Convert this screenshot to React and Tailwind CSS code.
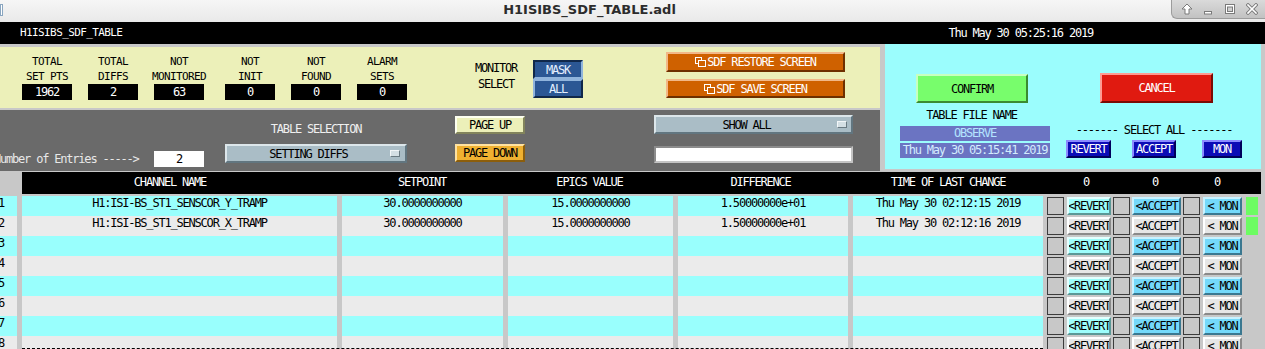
import React from 'react';

const FONT = "font-['DejaVu_Sans_Mono','Liberation_Mono',monospace] text-[12px] tracking-[-1.2px] leading-[14px]";
const SMALL = 'text-[11px] tracking-[-0.6px]';

const rows = [
  { name: 'H1:ISI-BS_ST1_SENSCOR_Y_TRAMP', set: '30.0000000000', epics: '15.0000000000', diff: '1.50000000e+01', time: 'Thu May 30 02:12:15 2019', flag: true },
  { name: 'H1:ISI-BS_ST1_SENSCOR_X_TRAMP', set: '30.0000000000', epics: '15.0000000000', diff: '1.50000000e+01', time: 'Thu May 30 02:12:16 2019', flag: true },
  {}, {}, {}, {}, {}, {},
];

const stats = [
  { a: 'TOTAL', b: 'SET PTS', v: '1962', ml: 'ml-[22px]' },
  { a: 'TOTAL', b: 'DIFFS', v: '2', ml: 'ml-[16px]' },
  { a: 'NOT', b: 'MONITORED', v: '63', ml: 'ml-[16px]' },
  { a: 'NOT', b: 'INIT', v: '0', ml: 'ml-[21px]' },
  { a: 'NOT', b: 'FOUND', v: '0', ml: 'ml-[16px]' },
  { a: 'ALARM', b: 'SETS', v: '0', ml: 'ml-[16px]' },
];

const TitleBar = () => (
  <div className="h-[22px] flex bg-gradient-to-b from-[#f6f6f6] to-[#e9e9e9] relative">
    <div className="absolute left-0 top-[4px] w-[3px] h-[12px] border border-[#8aa6c0] bg-white" />
    <div className="w-[1171px] text-center pl-[8px] pt-[1px] font-['DejaVu_Sans',sans-serif] font-bold text-[13px] leading-[18px] text-[#2c2c2c] tracking-normal">
      H1ISIBS_SDF_TABLE.adl
    </div>
    <div className="w-[94px] h-[19px] bg-gradient-to-b from-[#dadada] to-[#c2c2c2] border-l border-b border-[#9c9c9c] rounded-bl-[6px] flex items-center">
      <svg className="ml-[9px]" width="12" height="12" viewBox="0 0 12 12">
        <polygon points="6,1 11,6 8,6 8,11 4,11 4,6 1,6" fill="white" stroke="#7a7a7a" strokeWidth="1" />
      </svg>
      <svg className="ml-[9px]" width="12" height="12" viewBox="0 0 12 12">
        <rect x="2.5" y="8.5" width="7" height="2.5" fill="white" stroke="#7a7a7a" strokeWidth="1" />
      </svg>
      <svg className="ml-[10px]" width="12" height="12" viewBox="0 0 12 12">
        <rect x="1.5" y="1.5" width="9" height="9" fill="white" stroke="#7a7a7a" strokeWidth="1" />
        <rect x="3.5" y="4" width="5" height="4.5" fill="#cfcfcf" stroke="#7a7a7a" strokeWidth="1" />
      </svg>
      <svg className="ml-[10px]" width="12" height="12" viewBox="0 0 12 12">
        <path d="M2 2 L10 10 M10 2 L2 10" stroke="#7a7a7a" strokeWidth="3.4" strokeLinecap="square" />
        <path d="M2 2 L10 10 M10 2 L2 10" stroke="white" strokeWidth="1.6" strokeLinecap="square" />
      </svg>
    </div>
  </div>
);

const CopyIcon = () => (
  <svg width="11" height="10" viewBox="0 0 11 10" className="mr-[1px]">
    <rect x="0.5" y="0.5" width="6" height="6" fill="none" stroke="white" />
    <rect x="3.5" y="3.5" width="7" height="6" fill="#cf6100" stroke="white" />
  </svg>
);

const Indicator = () => (
  <div className="w-[10px] h-[7px] bg-[#d4dfe4] border border-t-[#f2f6f8] border-l-[#f2f6f8] border-r-[#6a7a82] border-b-[#6a7a82]" />
);

const StatsPanel = () => (
  <div className="h-[61px] bg-[#ecf0b9] flex">
    {stats.map((s, i) => (
      <div key={i} className={`${s.ml} w-[50px] flex flex-col items-center pt-[7px] leading-[15px] whitespace-nowrap`}>
        <div className={SMALL}>{s.a}</div>
        <div className={SMALL}>{s.b}</div>
        <div className="w-[50px] h-[16px] bg-black text-white text-center leading-[16px]">{s.v}</div>
      </div>
    ))}
    <div className="ml-[58px] w-[62px] flex flex-col items-center pt-[13px] leading-[16px]">
      <div>MONITOR</div>
      <div>SELECT</div>
    </div>
    <div className="ml-[6px] w-[50px] pt-[13px] flex flex-col text-[#e4efff]">
      <div className="h-[19px] bg-[#2b5794] border-2 border-t-[#10284a] border-l-[#10284a] border-r-[#90b4dc] border-b-[#90b4dc] flex items-center justify-center">MASK</div>
      <div className="h-[19px] bg-[#2b5794] border-2 border-t-[#90b4dc] border-l-[#90b4dc] border-r-[#10284a] border-b-[#10284a] flex items-center justify-center">ALL</div>
    </div>
    <div className="ml-[83px] w-[179px] pt-[5px] flex flex-col text-white">
      <div className="h-[20px] bg-[#cf6100] border-2 border-t-[#f2b888] border-l-[#f2b888] border-r-[#6e3000] border-b-[#6e3000] flex items-center justify-center">
        <CopyIcon />SDF RESTORE SCREEN
      </div>
      <div className="mt-[7px] h-[19px] bg-[#cf6100] border-2 border-t-[#f2b888] border-l-[#f2b888] border-r-[#6e3000] border-b-[#6e3000] flex items-center justify-center">
        <CopyIcon />SDF SAVE SCREEN
      </div>
    </div>
  </div>
);

const ControlPanel = () => (
  <div className="mt-[2px] h-[61px] bg-[#6a6a6a] flex">
    <div className="w-[204px] pt-[36px] flex items-center overflow-hidden">
      <span className="-ml-[6px] text-[#e8e8e8] whitespace-nowrap">Number of Entries -----&gt;</span>
      <div className="ml-auto w-[50px] h-[16px] bg-white text-center leading-[16px]">2</div>
    </div>
    <div className="ml-[21px] w-[182px] pt-[12px] flex flex-col">
      <div className="text-center text-[#f0f0f0]">TABLE SELECTION</div>
      <div className="mt-[8px] h-[19px] bg-[#aabdc6] border-2 border-t-[#dce6ea] border-l-[#dce6ea] border-r-[#627680] border-b-[#627680] flex items-center">
        <span className="flex-1 text-center">SETTING DIFFS</span>
        <span className="mr-[5px]"><Indicator /></span>
      </div>
    </div>
    <div className="ml-[48px] w-[70px] pt-[6px] flex flex-col">
      <div className="h-[18px] bg-[#ecf0b9] border-2 border-t-[#fdfff0] border-l-[#fdfff0] border-r-[#82845c] border-b-[#82845c] flex items-center justify-center">PAGE UP</div>
      <div className="mt-[10px] h-[18px] bg-[#efb131] border-2 border-t-[#ffe2a0] border-l-[#ffe2a0] border-r-[#8c5e0c] border-b-[#8c5e0c] flex items-center justify-center">PAGE DOWN</div>
    </div>
    <div className="ml-[129px] w-[199px] pt-[5px] flex flex-col">
      <div className="h-[19px] bg-[#aabdc6] border-2 border-t-[#dce6ea] border-l-[#dce6ea] border-r-[#627680] border-b-[#627680] flex items-center">
        <span className="flex-1 text-center">SHOW ALL</span>
        <span className="mr-[4px]"><Indicator /></span>
      </div>
      <div className="mt-[12px] h-[17px] bg-white border-2 border-t-[#8c8c8c] border-l-[#8c8c8c] border-r-[#c4c4c4] border-b-[#c4c4c4]" />
    </div>
  </div>
);

const CyanPanel = () => (
  <div className="ml-[5px] w-[376px] h-[125px] bg-[#9bfdfd] flex">
    <div className="ml-[15px] w-[150px] flex flex-col">
      <div className="mt-[30px] ml-[16px] w-[112px] h-[29px] bg-[#78fd6c] border-2 border-t-[#c8ffc0] border-l-[#c8ffc0] border-r-[#3a8a32] border-b-[#3a8a32] flex items-center justify-center">CONFIRM</div>
      <div className="mt-[5px] w-[143px] text-center">TABLE FILE NAME</div>
      <div className="mt-[4px] h-[15px] bg-[#6b74c2] text-[#b4e4ff] text-center leading-[15px]">OBSERVE</div>
      <div className="mt-[2px] h-[15px] bg-[#6b74c2] text-[#d4ecff] text-center leading-[15px] whitespace-nowrap">Thu May 30 05:15:41 2019</div>
    </div>
    <div className="ml-[16px] w-[176px] flex flex-col">
      <div className="mt-[29px] ml-[34px] w-[113px] h-[30px] bg-[#e01a10] border-2 border-t-[#ff9a92] border-l-[#ff9a92] border-r-[#7a0a04] border-b-[#7a0a04] text-white flex items-center justify-center">CANCEL</div>
      <div className="mt-[20px] text-center whitespace-nowrap">------- SELECT ALL -------</div>
      <div className="mt-[3px] flex text-white">
        <div className="w-[45px] h-[18px] bg-[#0c0cb6] border-2 border-t-[#8c8cff] border-l-[#8c8cff] border-r-[#00005a] border-b-[#00005a] flex items-center justify-center">REVERT</div>
        <div className="ml-[21px] w-[44px] h-[18px] bg-[#0c0cb6] border-2 border-t-[#8c8cff] border-l-[#8c8cff] border-r-[#00005a] border-b-[#00005a] flex items-center justify-center">ACCEPT</div>
        <div className="ml-[26px] w-[40px] h-[18px] bg-[#0c0cb6] border-2 border-t-[#8c8cff] border-l-[#8c8cff] border-r-[#00005a] border-b-[#00005a] flex items-center justify-center">MON</div>
      </div>
    </div>
  </div>
);

const Square = ({ ml }) => (
  <div className={`${ml} w-[17px] h-[18px] bg-[#c8c8c8] border border-[#3c3c3c]`} />
);

const RowButtons = ({ odd, flag }) => {
  const rev = odd
    ? 'bg-[#9dfdfb] border-t-[#e4ffff] border-l-[#e4ffff] border-r-[#5a9896] border-b-[#5a9896]'
    : 'bg-[#e6e6e6] border-t-[#ffffff] border-l-[#ffffff] border-r-[#8a8a8a] border-b-[#8a8a8a]';
  const blu = odd
    ? 'bg-[#74d9fa] border-t-[#c8f2ff] border-l-[#c8f2ff] border-r-[#3a7890] border-b-[#3a7890]'
    : 'bg-[#e6e6e6] border-t-[#ffffff] border-l-[#ffffff] border-r-[#8a8a8a] border-b-[#8a8a8a]';
  const base = 'h-[18px] border-2 flex items-center justify-center overflow-hidden whitespace-nowrap';
  return (
    <div className="w-[219px] h-[20px] flex items-center">
      <Square ml="ml-[4px]" />
      <div className={`ml-[3px] w-[44px] ${base} ${rev}`}>&lt;REVERT</div>
      <Square ml="ml-[2px]" />
      <div className={`ml-[2px] w-[49px] ${base} ${blu}`}>&lt;ACCEPT</div>
      <Square ml="ml-[2px]" />
      <div className={`ml-[3px] w-[39px] ${base} ${blu}`}>&lt; MON</div>
      {flag && <div className="ml-[4px] w-[12px] h-[18px] bg-[#6cfc62]" />}
    </div>
  );
};

const Table = () => (
  <div className="mt-[1px]">
    <div className="flex">
      <div className="w-[22px] h-[22px]" />
      <div className="w-[1239px] h-[22px] bg-black text-white flex pt-[3px]">
        <div className="w-[320px] text-center pr-[24px]">CHANNEL NAME</div>
        <div className="w-[166px] text-center pr-[6px]">SETPOINT</div>
        <div className="w-[170px] text-center pr-[7px]">EPICS VALUE</div>
        <div className="w-[175px] text-center pr-[10px]">DIFFERENCE</div>
        <div className="w-[190px] text-center">TIME OF LAST CHANGE</div>
        <div className="w-[77px] text-center pl-[9px]">0</div>
        <div className="w-[70px] text-center">0</div>
        <div className="w-[71px] text-center pr-[17px]">0</div>
      </div>
    </div>
    <div className="mt-[2px] flex flex-col">
      {rows.map((r, i) => {
        const odd = i % 2 === 0;
        const bg = odd ? 'bg-[#99fffd]' : 'bg-[#ebebeb]';
        return (
          <div key={i} className="relative flex h-[20px]">
            <div className={`w-[17px] overflow-hidden ${bg}`}>
              <span className="block -ml-[2px]">{i + 1}</span>
            </div>
            <div className={`ml-[5px] w-[315px] text-center ${bg}`}>{r.name}</div>
            <div className={`ml-[5px] w-[161px] text-center ${bg}`}>{r.set}</div>
            <div className={`ml-[5px] w-[165px] text-center ${bg}`}>{r.epics}</div>
            <div className={`ml-[5px] w-[170px] text-center ${bg}`}>{r.diff}</div>
            <div className={`ml-[5px] w-[190px] text-center ${bg}`}>{r.time}</div>
            <RowButtons odd={odd} flag={r.flag} />
            {i === 7 && (
              <div className="absolute left-[22px] top-[12px] w-[1021px] border-t border-dashed border-black" />
            )}
          </div>
        );
      })}
    </div>
  </div>
);

export default function App() {
  return (
    <div className={`w-[1265px] h-[349px] overflow-hidden bg-[#c8c8c8] text-black ${FONT}`}>
      <TitleBar />
      <div className="h-[22px] bg-black text-white flex items-center">
        <span className={`ml-[20px] ${SMALL}`}>H1ISIBS_SDF_TABLE</span>
        <span className="ml-[826px]">Thu May 30 05:25:16 2019</span>
      </div>
      <div className="flex h-[127px]">
        <div className="w-[880px] pt-[3px]">
          <StatsPanel />
          <ControlPanel />
        </div>
        <CyanPanel />
      </div>
      <Table />
    </div>
  );
}
